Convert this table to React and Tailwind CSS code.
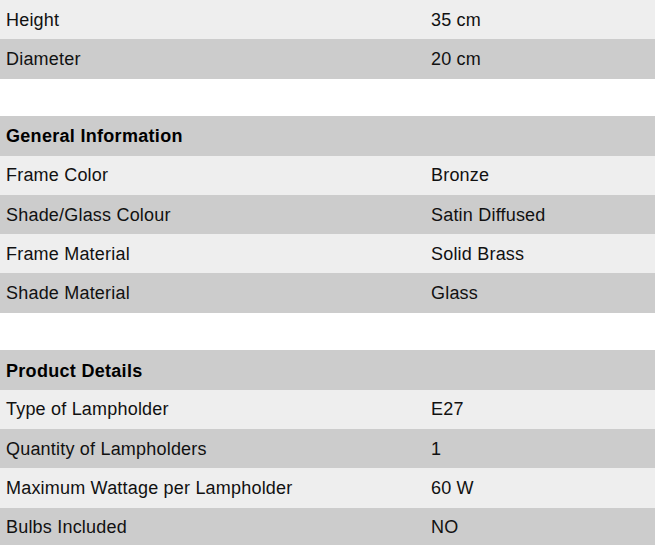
import React from "react";

const sections = [
  {
    title: null,
    rows: [
      ["Height", "35 cm"],
      ["Diameter", "20 cm"],
    ],
  },
  {
    title: "General Information",
    rows: [
      ["Frame Color", "Bronze"],
      ["Shade/Glass Colour", "Satin Diffused"],
      ["Frame Material", "Solid Brass"],
      ["Shade Material", "Glass"],
    ],
  },
  {
    title: "Product Details",
    rows: [
      ["Type of Lampholder", "E27"],
      ["Quantity of Lampholders", "1"],
      ["Maximum Wattage per Lampholder", "60 W"],
      ["Bulbs Included", "NO"],
    ],
  },
];

const Row = ({ label, value, odd }) => (
  <div
    className={`grid grid-cols-[425px_1fr] h-[39.3px] items-center pt-[1px] ${
      odd ? "bg-[#cccccc]" : "bg-[#eeeeee]"
    }`}
  >
    <div className="pl-[6px]">{label}</div>
    <div className="pl-[6px]">{value}</div>
  </div>
);

const App = () => {
  return (
    <div
      className="w-[655px] bg-white text-[18px] tracking-[0.2px] text-[#111111]"
      style={{ fontFamily: '"Liberation Sans", Arial, sans-serif' }}
    >
      {sections.map((section, i) => (
        <div key={i} className={i > 0 ? "mt-[37.7px]" : ""}>
          {section.title && (
            <div className="h-[39.3px] flex items-center pt-[2px] bg-[#cccccc] pl-[6px] font-bold tracking-[0.3px] text-black">
              {section.title}
            </div>
          )}
          {section.rows.map(([label, value], j) => (
            <Row key={label} label={label} value={value} odd={j % 2 === 1} />
          ))}
        </div>
      ))}
    </div>
  );
};

export default App;
